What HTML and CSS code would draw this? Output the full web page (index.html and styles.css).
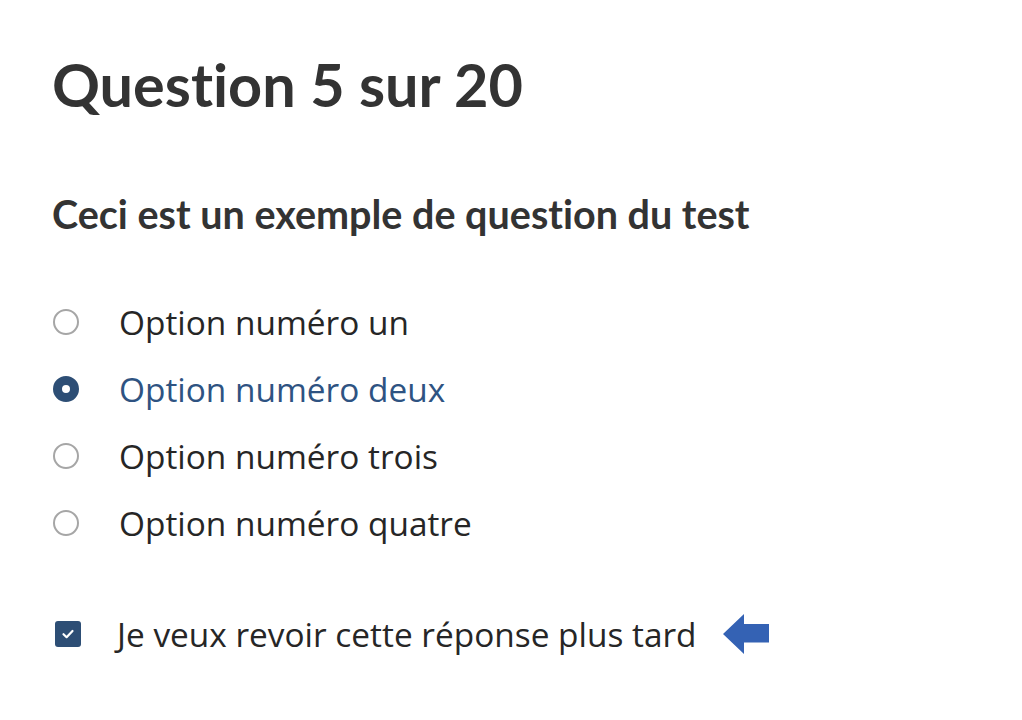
FILE: index.html
```html
<!DOCTYPE html>
<html lang="fr">
<head>
<meta charset="utf-8">
<title>Question 5 sur 20</title>
<link rel="stylesheet" href="styles.css">
</head>
<body>
<main class="quiz">
  <h1 class="title">Question 5 sur 20</h1>
  <h2 class="question">Ceci est un exemple de question du test</h2>
  <ul class="options">
    <li class="option"><span class="radio"></span><span class="label">Option numéro un</span></li>
    <li class="option selected"><span class="radio"></span><span class="label">Option numéro deux</span></li>
    <li class="option"><span class="radio"></span><span class="label">Option numéro trois</span></li>
    <li class="option"><span class="radio"></span><span class="label">Option numéro quatre</span></li>
  </ul>
  <div class="review">
    <span class="checkbox">
      <svg viewBox="0 0 26 26" width="26" height="26"><path d="M8.5 13.2 L11.6 16.2 L17.5 10" fill="none" stroke="#fff" stroke-width="2.2" stroke-linecap="round" stroke-linejoin="round"/></svg>
    </span>
    <span class="label">Je veux revoir cette réponse plus tard</span>
    <svg class="arrow" viewBox="0 0 46 40" width="46" height="40"><path d="M0 20 L21 0 L21 10 L46 10 L46 28.5 L21 28.5 L21 40 Z" fill="#3462b4"/></svg>
  </div>
</main>
</body>
</html>
```
FILE: styles.css
```css
html, body {
  margin: 0;
  padding: 0;
  background: #fff;
}
.quiz {
  padding: 48px 0 0 52px;
  color: #333;
  font-variant-ligatures: none;
}
.title {
  font-family: Lato, "Liberation Sans", sans-serif;
  font-weight: 700;
  font-size: 59.4px;
  line-height: 72px;
  margin: 0;
}
.question {
  font-family: Lato, "Liberation Sans", sans-serif;
  font-weight: 700;
  font-size: 39.5px;
  line-height: 44px;
  margin: 72px 0 0;
}
.options {
  list-style: none;
  margin: 64px 0 0;
  padding: 0;
  display: flex;
  flex-direction: column;
  gap: 23px;
}
.option {
  display: flex;
  align-items: center;
  gap: 40px;
  height: 44px;
  font-family: "Open Sans", sans-serif;
  font-size: 33.4px;
  color: #262626;
}
.radio {
  box-sizing: border-box;
  width: 26px;
  height: 26px;
  border-radius: 50%;
  border: 2px solid #a6a6a6;
  margin-left: 1px;
  flex: none;
}
.option.selected {
  color: #2e5382;
}
.option.selected .radio {
  border: 9px solid #2d4e75;
  background: #fff;
}
.review {
  display: flex;
  align-items: center;
  margin-top: 67px;
  font-family: "Open Sans", sans-serif;
  font-size: 33.4px;
  color: #262626;
  height: 44px;
}
.checkbox {
  width: 26px;
  height: 26px;
  border-radius: 3px;
  background: #2d4e75;
  margin-left: 3px;
  flex: none;
  display: flex;
}
.review .label {
  margin-left: 36px;
}
.arrow {
  margin-left: 26px;
  flex: none;
}
```
